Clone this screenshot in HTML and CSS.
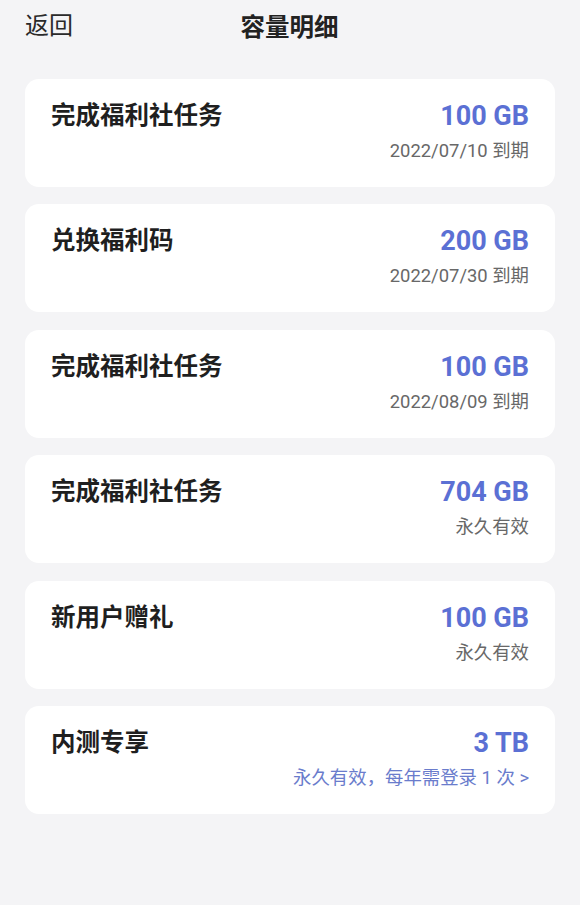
FILE: index.html
```html
<!DOCTYPE html>
<html lang="zh-CN">
<head>
    <meta charset="UTF-8">
    <meta name="viewport" content="width=device-width, initial-scale=1.0">
    <title>容量明细</title>
    <link rel="stylesheet" href="styles.css">
</head>
<body>
    <!-- 顶部栏 -->
    <div class="top-bar">
        <span class="back">返回</span>
        <h1 class="page-title">容量明细</h1>
    </div>

    <!-- 容量列表 -->
    <ul class="list">
        <li class="card">
            <div class="card-name">完成福利社任务</div>
            <div class="card-info">
                <div class="size">100 GB</div>
                <div class="expire">2022/07/10 到期</div>
            </div>
        </li>
        <li class="card">
            <div class="card-name">兑换福利码</div>
            <div class="card-info">
                <div class="size">200 GB</div>
                <div class="expire">2022/07/30 到期</div>
            </div>
        </li>
        <li class="card">
            <div class="card-name">完成福利社任务</div>
            <div class="card-info">
                <div class="size">100 GB</div>
                <div class="expire">2022/08/09 到期</div>
            </div>
        </li>
        <li class="card">
            <div class="card-name">完成福利社任务</div>
            <div class="card-info">
                <div class="size">704 GB</div>
                <div class="expire">永久有效</div>
            </div>
        </li>
        <li class="card">
            <div class="card-name">新用户赠礼</div>
            <div class="card-info">
                <div class="size">100 GB</div>
                <div class="expire">永久有效</div>
            </div>
        </li>
        <li class="card">
            <div class="card-name">内测专享</div>
            <div class="card-info">
                <div class="size">3 TB</div>
                <div class="expire link">永久有效，每年需登录 1 次 &gt;</div>
            </div>
        </li>
    </ul>
</body>
</html>
```

FILE: styles.css
```css
/* 通用 */
body {
    margin: 0;
    padding: 0;
    background-color: #f4f4f6;
    font-family: Roboto, "Noto Sans CJK SC", sans-serif;
    color: #1f1f1f;
}

/* 顶部栏 */
.top-bar {
    position: relative;
    height: 50px;
    display: flex;
    align-items: center;
    justify-content: center;
}

.back {
    position: absolute;
    left: 25px;
    top: 9px;
    font-size: 24px;
    line-height: 34px;
    color: #2a2a2a;
}

.page-title {
    margin: 0 0 0 -1px;
    font-size: 24.5px;
    font-weight: bold;
    color: #222;
}

/* 列表 */
.list {
    list-style: none;
    margin: 29px 25px 0;
    padding: 0;
    display: flex;
    flex-direction: column;
    gap: 17.4px;
}

.card {
    background-color: #fff;
    border-radius: 14px;
    height: 108px;
    box-sizing: border-box;
    padding: 18px 26px 0 26px;
    display: flex;
    justify-content: space-between;
}

.card-name {
    padding-top: 2px;
    font-size: 24.5px;
    font-weight: bold;
    color: #1f1f1f;
    line-height: 34px;
}

.card-info {
    text-align: right;
}

.size {
    font-size: 27px;
    font-weight: bold;
    color: #5b70d4;
    line-height: 38px;
}

.expire {
    margin-top: 3px;
    font-size: 18.4px;
    color: #686868;
    line-height: 26px;
}

.expire.link {
    color: #6a7ccc;
}
```
